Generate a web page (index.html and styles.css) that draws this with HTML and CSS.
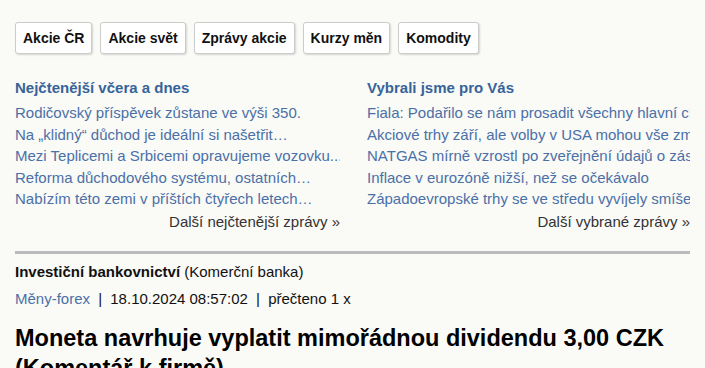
FILE: index.html
```html
<!DOCTYPE html>
<html>
<head>
    <title>Moneta navrhuje vyplatit mimořádnou dividendu</title>
    <link rel="stylesheet" href="styles.css">
</head>
<body>
    <div class="page">
        <div class="tabs">
            <a class="tab" href="#">Akcie ČR</a>
            <a class="tab" href="#">Akcie svět</a>
            <a class="tab" href="#">Zprávy akcie</a>
            <a class="tab" href="#">Kurzy měn</a>
            <a class="tab" href="#">Komodity</a>
        </div>

        <div class="boxes">
            <div class="box">
                <h3 class="box-title">Nejčtenější včera a dnes</h3>
                <ul class="box-list">
                    <li><a href="#">Rodičovský příspěvek zůstane ve výši 350.</a></li>
                    <li><a href="#">Na „klidný“ důchod je ideální si našetřit…</a></li>
                    <li><a href="#">Mezi Teplicemi a Srbicemi opravujeme vozovku...</a></li>
                    <li><a href="#">Reforma důchodového systému, ostatních…</a></li>
                    <li><a href="#">Nabízím této zemi v příštích čtyřech letech…</a></li>
                </ul>
                <a class="box-more" href="#">Další nejčtenější zprávy »</a>
            </div>
            <div class="box">
                <h3 class="box-title">Vybrali jsme pro Vás</h3>
                <ul class="box-list">
                    <li><a href="#">Fiala: Podařilo se nám prosadit všechny hlavní cíle</a></li>
                    <li><a href="#">Akciové trhy září, ale volby v USA mohou vše změnit</a></li>
                    <li><a href="#">NATGAS mírně vzrostl po zveřejnění údajů o zásobách</a></li>
                    <li><a href="#">Inflace v eurozóně nižší, než se očekávalo</a></li>
                    <li><a href="#">Západoevropské trhy se ve středu vyvíjely smíšeně</a></li>
                </ul>
                <a class="box-more" href="#">Další vybrané zprávy »</a>
            </div>
        </div>

        <div class="article">
            <div class="source"><b>Investiční bankovnictví</b> (Komerční banka)</div>
            <div class="meta">
                <a href="#">Měny-forex</a>
                <span class="sep">|</span>
                18.10.2024 08:57:02
                <span class="sep">|</span>
                přečteno 1 x
            </div>
            <h1 class="headline">Moneta navrhuje vyplatit mimořádnou dividendu 3,00 CZK (Komentář k firmě)</h1>
        </div>
    </div>
</body>
</html>
```

FILE: styles.css
```css
body {
    margin: 0;
    background-color: #fafaf6;
    font-family: "Liberation Sans", Arial, sans-serif;
    font-size: 15px;
    color: #222;
}
a {
    text-decoration: none;
}
.page {
    padding: 22px 15px 0;
}
.tabs {
    display: flex;
    gap: 8px;
}
.tab {
    display: inline-block;
    height: 30px;
    line-height: 30px;
    padding: 0 7px;
    background-color: #fff;
    border: 1px solid #ccc;
    border-radius: 3px;
    box-shadow: 1px 1px 2px rgba(0, 0, 0, 0.15);
    color: #111;
    font-weight: bold;
    font-size: 14px;
}
.boxes {
    display: grid;
    grid-template-columns: 325px 323px;
    gap: 27px;
    margin-top: 25px;
    padding-bottom: 19px;
    border-bottom: 3px solid #bbb;
}
.box {
    display: flex;
    flex-direction: column;
    min-width: 0;
}
.box-title {
    margin: 0 0 5px;
    font-size: 15px;
    line-height: 18px;
    color: #36649a;
}
.box-list {
    list-style: none;
    margin: 0;
    padding: 0;
}
.box-list li {
    line-height: 21.5px;
    white-space: nowrap;
    overflow: hidden;
}
.box-list a {
    color: #4a70a8;
}
.box-more {
    align-self: flex-end;
    margin-top: 2px;
    line-height: 20px;
    color: #333;
}
.article {
    color: #111;
}
.source {
    margin-top: 8px;
    line-height: 20px;
}
.meta {
    margin-top: 7px;
    line-height: 20px;
}
.meta a {
    color: #4a70a8;
}
.sep {
    margin: 0 4px;
}
.headline {
    margin: 14px 0 0;
    font-size: 23.5px;
    line-height: 30px;
    color: #000;
}
```
